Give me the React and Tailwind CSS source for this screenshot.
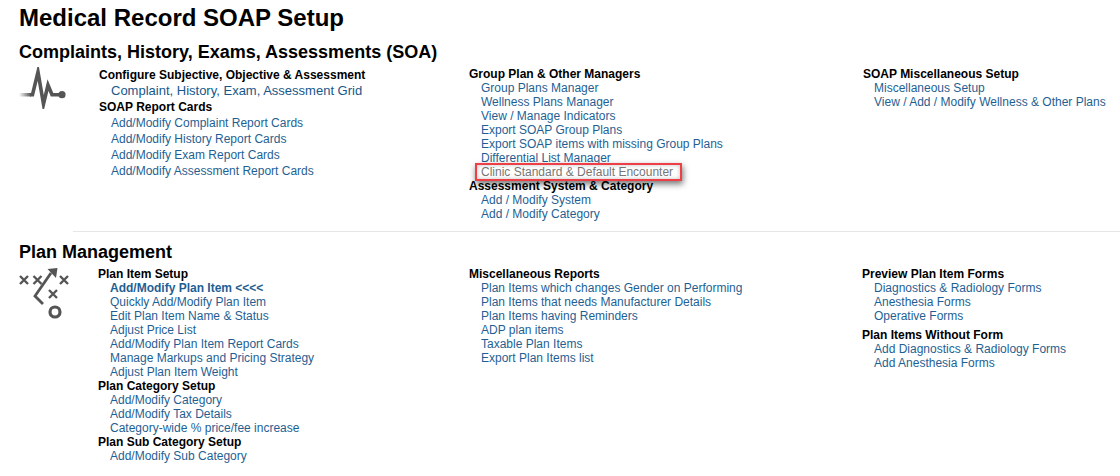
const SOA_COLS = [
  {
    width: 'w-[370px]',
    groups: [
      {
        title: 'Configure Subjective, Objective & Assessment',
        leading: 'leading-[16px]',
        links: [{ label: 'Complaint, History, Exam, Assessment Grid', large: true }],
      },
      {
        title: 'SOAP Report Cards',
        leading: 'leading-[16px]',
        links: ['Add/Modify Complaint Report Cards', 'Add/Modify History Report Cards', 'Add/Modify Exam Report Cards', 'Add/Modify Assessment Report Cards'],
      },
    ],
  },
  {
    width: 'w-[394px]',
    groups: [
      {
        title: 'Group Plan & Other Managers',
        links: ['Group Plans Manager', 'Wellness Plans Manager', 'View / Manage Indicators', 'Export SOAP Group Plans', 'Export SOAP items with missing Group Plans', 'Differential List Manager', { label: 'Clinic Standard & Default Encounter', boxed: true }],
      },
      { title: 'Assessment System & Category', links: ['Add / Modify System', 'Add / Modify Category'] },
    ],
  },
  {
    width: 'w-[250px]',
    groups: [{ title: 'SOAP Miscellaneous Setup', indent: 'pl-[11px]', links: ['Miscellaneous Setup', 'View / Add / Modify Wellness & Other Plans'] }],
  },
];

const PLAN_COLS = [
  {
    width: 'w-[371px]',
    groups: [
      {
        title: 'Plan Item Setup',
        links: [{ label: 'Add/Modify Plan Item <<<<', bold: true }, 'Quickly Add/Modify Plan Item', 'Edit Plan Item Name & Status', 'Adjust Price List', 'Add/Modify Plan Item Report Cards', 'Manage Markups and Pricing Strategy', 'Adjust Plan Item Weight'],
      },
      { title: 'Plan Category Setup', links: ['Add/Modify Category', 'Add/Modify Tax Details', 'Category-wide % price/fee increase'] },
      { title: 'Plan Sub Category Setup', links: ['Add/Modify Sub Category'] },
    ],
  },
  {
    width: 'w-[393px]',
    groups: [
      {
        title: 'Miscellaneous Reports',
        links: ['Plan Items which changes Gender on Performing', 'Plan Items that needs Manufacturer Details', 'Plan Items having Reminders', 'ADP plan items', 'Taxable Plan Items', 'Export Plan Items list'],
      },
    ],
  },
  {
    width: 'w-[250px]',
    groups: [
      { title: 'Preview Plan Item Forms', links: ['Diagnostics & Radiology Forms', 'Anesthesia Forms', 'Operative Forms'] },
      { title: 'Plan Items Without Form', className: 'mt-[5px]', links: ['Add Diagnostics & Radiology Forms', 'Add Anesthesia Forms'] },
    ],
  },
];

function PulseIcon() {
  return (
    <svg width="48" height="42" viewBox="0 0 48 42" fill="none" className="block">
      <defs>
        <linearGradient id="pulseFade" x1="0" x2="1" y1="0" y2="0">
          <stop offset="0" stopColor="#555" stopOpacity="0" />
          <stop offset="1" stopColor="#555" />
        </linearGradient>
      </defs>
      <rect x="0" y="26" width="12" height="3.5" fill="url(#pulseFade)" />
      <path d="M11 27.7H13.5L19 5L24.5 37L29 18L33 27.7H43" stroke="#555" strokeWidth="3.6" strokeMiterlimit="8" />
      <circle cx="43" cy="27.7" r="3.6" fill="#555" />
    </svg>
  );
}

function PlayIcon() {
  return (
    <svg width="52" height="52" viewBox="0 0 52 52" fill="none" stroke="#555" strokeWidth="2.4" className="block">
      <path d="M1 9L9 17M9 9L1 17M14.5 9L22.5 17M22.5 9L14.5 17M41 9L49 17M49 9L41 17M30 23L38 31M38 23L30 31" />
      <path d="M24 37L16 29L32 6" strokeWidth="2.8" />
      <path d="M28.5 2L38.5 1L37 11Z" fill="#555" stroke="none" />
      <circle cx="36" cy="45" r="5" strokeWidth="3.2" />
    </svg>
  );
}

function Group({ group }) {
  const leading = group.leading || 'leading-[14px]';
  const indent = group.indent || 'pl-3';
  return (
    <div className={group.className}>
      <div className={`font-bold text-black ${leading}`}>{group.title}</div>
      {group.links.map((link) => {
        const item = typeof link === 'string' ? { label: link } : link;
        if (item.boxed) {
          return (
            <div key={item.label} className={`relative ${indent} text-[#777777] ${leading}`}>
              <span className="absolute left-[6px] top-[-2px] h-[18px] w-[207px] border-[2px] border-[#ef3f46] shadow-[1px_3px_6px_rgba(0,0,0,0.55),inset_0_0_4px_rgba(0,0,0,0.25)]" />
              {item.label}
            </div>
          );
        }
        return (
          <div key={item.label} className={`${indent} text-[#1f5f93] ${leading} ${item.bold ? 'font-bold' : ''} ${item.large ? 'text-[13px] text-[#14588c]' : ''}`}>
            {item.label}
          </div>
        );
      })}
    </div>
  );
}

function Section({ title, icon, cols, iconWidth, className, bodyClass }) {
  return (
    <section className={className}>
      <h2 className="text-[18px] font-bold leading-[22px] text-black">{title}</h2>
      <div className={`flex ${bodyClass}`}>
        <div className={`${iconWidth} shrink-0`}>{icon}</div>
        {cols.map((col, i) => (
          <div key={i} className={`${col.width} shrink-0`}>
            {col.groups.map((g) => (
              <Group key={g.title} group={g} />
            ))}
          </div>
        ))}
      </div>
    </section>
  );
}

export default function App() {
  return (
    <div className="h-[476px] w-[1120px] overflow-hidden bg-white pl-[19px] pt-[4px] font-['Liberation_Sans',Arial,sans-serif] text-[12px]">
      <h1 className="text-[24px] font-bold leading-[28px] text-black">Medical Record SOAP Setup</h1>
      <Section
        title="Complaints, History, Exams, Assessments (SOA)"
        icon={<PulseIcon />}
        cols={SOA_COLS}
        iconWidth="w-[80px]"
        className="mt-[9px]"
        bodyClass="mt-[4px]"
      />
      <div className="ml-[54px] mt-[10px] h-px bg-[#e6e6e6]" />
      <Section
        title="Plan Management"
        icon={<PlayIcon />}
        cols={PLAN_COLS}
        iconWidth="w-[79px]"
        className="mt-[9px]"
        bodyClass="mt-[4px]"
      />
    </div>
  );
}
